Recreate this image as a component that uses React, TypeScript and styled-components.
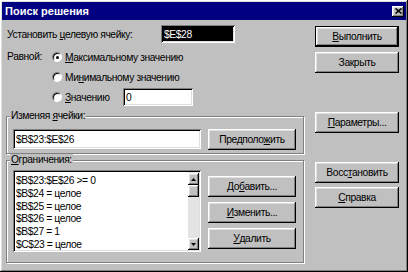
import React from 'react';
import styled, { createGlobalStyle, css } from 'styled-components';

const GlobalStyle = createGlobalStyle`
  html, body {
    margin: 0;
    padding: 0;
    background: #c0c0c0;
  }
  body {
    font-family: "Liberation Sans", Arial, sans-serif;
    font-size: 10.3px;
    letter-spacing: -0.4px;
    color: #000;
  }
`;

const raised = css`
  box-shadow: inset -1px -1px 0 #000, inset 1px 1px 0 #fff,
    inset -2px -2px 0 #808080, inset 2px 2px 0 #dfdfdf;
`;

const sunken = css`
  box-shadow: inset 1px 1px 0 #808080, inset -1px -1px 0 #fff,
    inset 2px 2px 0 #000, inset -2px -2px 0 #dfdfdf;
`;

const Window = styled.div`
  box-sizing: border-box;
  width: 408px;
  height: 272px;
  padding: 2px;
  background: #c0c0c0;
  ${raised};
  display: flex;
  flex-direction: column;
`;

const TitleBar = styled.div`
  height: 18px;
  flex: none;
  background: #000080;
  display: flex;
  align-items: center;
  justify-content: space-between;
  padding: 0 2px 0 3px;
`;

const Title = styled.span`
  color: #fff;
  font-weight: bold;
  font-size: 11px;
  letter-spacing: 0;
`;

const CloseButton = styled.div`
  width: 12px;
  height: 11px;
  background: #c0c0c0;
  ${raised};
  display: flex;
  align-items: center;
  justify-content: center;
`;

const Body = styled.div`
  flex: 1;
  display: flex;
`;

const LeftPane = styled.div`
  width: 300px;
  padding: 5px 0 0 2px;
  display: flex;
  flex-direction: column;
`;

const RightPane = styled.div`
  margin-left: 11px;
  padding-top: 6px;
  display: flex;
  flex-direction: column;
`;

const TargetRow = styled.div`
  display: flex;
  align-items: center;
  height: 18px;
  padding-left: 3px;
`;

const Label = styled.span<{ width?: number }>`
  flex: none;
  white-space: nowrap;
  width: ${p => (p.width ? `${p.width}px` : 'auto')};
`;

const Key = styled.span`
  text-decoration: underline;
`;

const Field = styled.div<{ width: number; height?: number; dark?: boolean }>`
  box-sizing: border-box;
  width: ${p => p.width}px;
  height: ${p => p.height ?? 18}px;
  padding: 0 3px;
  display: flex;
  align-items: center;
  background: ${p => (p.dark ? '#000' : '#fff')};
  color: ${p => (p.dark ? '#fff' : '#000')};
  white-space: nowrap;
  ${sunken};
`;

const EqualBlock = styled.div`
  display: flex;
  margin-top: 4px;
  padding-left: 3px;
`;

const RadioList = styled.div`
  display: flex;
  flex-direction: column;
`;

const RadioRow = styled.div`
  display: flex;
  align-items: center;
  height: 20px;
  gap: 3px;
`;

const Radio = styled.span<{ checked?: boolean }>`
  box-sizing: border-box;
  width: 10px;
  height: 10px;
  border-radius: 50%;
  background: #fff;
  border: 1px solid;
  border-color: #808080 #fff #fff #808080;
  box-shadow: inset 1px 1px 0 #000;
  display: flex;
  align-items: center;
  justify-content: center;
  &::after {
    content: '';
    width: 3px;
    height: 3px;
    border-radius: 50%;
    background: ${p => (p.checked ? '#000' : 'transparent')};
  }
`;

const Group = styled.fieldset<{ top: number; bottom: number }>`
  margin: ${p => p.top}px 0 0 2px;
  padding: 0 0 ${p => p.bottom}px 6px;
  min-width: 0;
  border: 1px solid #808080;
  box-shadow: inset 1px 1px 0 #fff, 1px 1px 0 #fff;
  display: flex;
`;

const Legend = styled.legend`
  padding: 0 1px;
  margin-left: -3px;
  line-height: 12px;
  background: #c0c0c0;
`;

const GroupInner = styled.div<{ pad: number }>`
  display: flex;
  gap: 7px;
  padding-top: ${p => p.pad}px;
`;

const Button = styled.div<{ width: number; gapTop?: number; isDefault?: boolean }>`
  box-sizing: border-box;
  width: ${p => p.width}px;
  height: 21px;
  flex: none;
  margin-top: ${p => p.gapTop ?? 0}px;
  display: flex;
  align-items: center;
  justify-content: center;
  white-space: nowrap;
  background: #c0c0c0;
  ${raised};
  ${p =>
    p.isDefault &&
    css`
      box-shadow: inset 0 0 0 1px #000, inset -2px -2px 0 #000, inset 2px 2px 0 #fff,
        inset -3px -3px 0 #808080, inset 3px 3px 0 #dfdfdf;
    `}
`;

const ButtonColumn = styled.div`
  display: flex;
  flex-direction: column;
  gap: 5px;
  padding-top: 6px;
`;

const ListBox = styled.div`
  box-sizing: border-box;
  width: 188px;
  height: 82px;
  padding: 2px;
  background: #fff;
  display: flex;
  ${sunken};
`;

const ListItems = styled.div`
  flex: 1;
  padding: 3px 0 0 1px;
  overflow: hidden;
`;

const ListItem = styled.div`
  height: 12.8px;
  line-height: 12.8px;
  white-space: nowrap;
`;

const ScrollBar = styled.div`
  width: 11px;
  display: flex;
  flex-direction: column;
  background: #e4e4e4;
  padding-top: 1px;
`;

const ScrollButton = styled.div<{ grow?: boolean }>`
  box-sizing: border-box;
  height: 12px;
  flex: none;
  background: #c0c0c0;
  ${raised};
  display: flex;
  align-items: center;
  justify-content: center;
  margin-top: ${p => (p.grow ? 'auto' : '0')};
`;

const Arrow = ({ down }: { down?: boolean }) => (
  <svg width="5" height="3" viewBox="0 0 5 3">
    <path d={down ? 'M0 0H5L2.5 3Z' : 'M0 3H5L2.5 0Z'} fill="#000" />
  </svg>
);

const constraints = [
  '$B$23:$E$26 >= 0',
  '$B$24 = целое',
  '$B$25 = целое',
  '$B$26 = целое',
  '$B$27 = 1',
  '$C$23 = целое',
];

export default function App() {
  return (
    <>
      <GlobalStyle />
      <Window>
        <TitleBar>
          <Title>Поиск решения</Title>
          <CloseButton>
            <svg width="7" height="6" viewBox="0 0 7 6">
              <path d="M0.5 0.5L6.5 5.5M6.5 0.5L0.5 5.5" stroke="#000" strokeWidth="1.6" />
            </svg>
          </CloseButton>
        </TitleBar>
        <Body>
          <LeftPane>
            <TargetRow>
              <Label width={154}>
                Установить <Key>ц</Key>елевую ячейку:
              </Label>
              <Field width={74} dark>
                $E$28
              </Field>
            </TargetRow>
            <EqualBlock>
              <Label width={45} style={{ height: 20, lineHeight: '20px' }}>
                Равной:
              </Label>
              <RadioList>
                <RadioRow>
                  <Radio checked />
                  <span>
                    <Key>М</Key>аксимальному значению
                  </span>
                </RadioRow>
                <RadioRow>
                  <Radio />
                  <span>
                    Ми<Key>н</Key>имальному значению
                  </span>
                </RadioRow>
                <RadioRow>
                  <Radio />
                  <Label width={55}>
                    <Key>З</Key>начению
                  </Label>
                  <Field width={70}>0</Field>
                </RadioRow>
              </RadioList>
            </EqualBlock>
            <Group top={3} bottom={3}>
              <Legend>
                Изменяя <Key>я</Key>чейки:
              </Legend>
              <GroupInner pad={7}>
                <Field width={188} height={20}>
                  $B$23:$E$26
                </Field>
                <Button width={88}>
                  Предполо<Key>ж</Key>ить
                </Button>
              </GroupInner>
            </Group>
            <Group top={0} bottom={10}>
              <Legend>
                <Key>О</Key>граничения:
              </Legend>
              <GroupInner pad={4}>
                <ListBox>
                  <ListItems>
                    {constraints.map(c => (
                      <ListItem key={c}>{c}</ListItem>
                    ))}
                  </ListItems>
                  <ScrollBar>
                    <ScrollButton>
                      <Arrow />
                    </ScrollButton>
                    <ScrollButton />
                    <ScrollButton grow>
                      <Arrow down />
                    </ScrollButton>
                  </ScrollBar>
                </ListBox>
                <ButtonColumn>
                  <Button width={88}>
                    До<Key>б</Key>авить...
                  </Button>
                  <Button width={88}>
                    <Key>И</Key>зменить...
                  </Button>
                  <Button width={88}>
                    <Key>У</Key>далить
                  </Button>
                </ButtonColumn>
              </GroupInner>
            </Group>
          </LeftPane>
          <RightPane>
            <Button width={84} isDefault>
              <Key>В</Key>ыполнить
            </Button>
            <Button width={84} gapTop={5}>
              Закрыть
            </Button>
            <Button width={84} gapTop={39}>
              <Key>П</Key>араметры...
            </Button>
            <Button width={84} gapTop={29}>
              Восс<Key>т</Key>ановить
            </Button>
            <Button width={84} gapTop={4}>
              <Key>С</Key>правка
            </Button>
          </RightPane>
        </Body>
      </Window>
    </>
  );
}
